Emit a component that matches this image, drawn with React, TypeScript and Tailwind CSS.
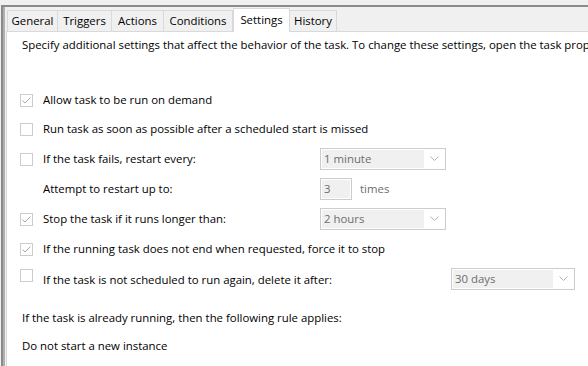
import React from "react";

const tabs: [string, string][] = [
  ["General", "w-[51px]"],
  ["Triggers", "w-[54px]"],
  ["Actions", "w-[52px]"],
  ["Conditions", "w-[69px]"],
  ["Settings", "w-[57px]"],
  ["History", "w-[47px]"],
];

function Check({ checked, className = "" }: { checked?: boolean; className?: string }) {
  return (
    <span className={`flex h-[13px] w-[13px] shrink-0 items-center justify-center border border-[#cccccc] bg-white ${className}`}>
      {checked && (
        <svg width="11" height="11" viewBox="0 0 11 11">
          <path d="M1.5 5.5 L4 8 L9.5 2.5" fill="none" stroke="#a8a8a8" strokeWidth="1" />
        </svg>
      )}
    </span>
  );
}

function Combo({ value, width }: { value: string; width: string }) {
  return (
    <div className={`flex h-[22px] ${width} shrink-0 items-stretch border border-[#cccccc] bg-white p-px`}>
      <div className="flex flex-1 items-center bg-[#f0f0f0] pl-[2px] text-[#6d6d6d]">{value}</div>
      <div className="flex w-[20px] items-center justify-center">
        <svg width="9" height="6" viewBox="0 0 9 6">
          <path d="M0.5 0.5 L4.5 4.5 L8.5 0.5" fill="none" stroke="#b4b4b4" strokeWidth="1" />
        </svg>
      </div>
    </div>
  );
}

function Row({ checked, label, children, h = "h-[30px]" }: { checked?: boolean; label: string; children?: React.ReactNode; h?: string }) {
  return (
    <div className={`flex ${h} items-center whitespace-nowrap`}>
      <Check checked={checked} className="-ml-[2px]" />
      <span className="ml-[10px] w-[277px] shrink-0">{label}</span>
      {children}
    </div>
  );
}

export default function App() {
  return (
    <div
      className="h-[366px] w-[588px] overflow-hidden bg-[#f0f0f0] pt-[5px] pl-[1px] text-[11.4px] text-black"
      style={{ fontFamily: '"Open Sans", "Noto Sans", sans-serif' }}
    >
      <div className="h-full border-t-2 border-l-2 border-[#8a8a8a]">
        <div className="h-full border-l-2 border-[#b0b0b0] pl-[1px]">
          <div className="flex h-[24px] items-end pl-[1px]">
            {tabs.map(([t, w]) =>
              t === "Settings" ? (
                <div key={t} className={`relative z-10 -mb-px flex h-[24px] ${w} items-start justify-center border border-b-0 border-[#d9d9d9] bg-white pt-[2px]`}>
                  {t}
                </div>
              ) : (
                <div key={t} className={`flex h-[21px] ${w} items-center justify-center border border-b-0 border-l-0 border-[#d9d9d9] bg-[#f0f0f0] first:border-l`}>
                  {t}
                </div>
              )
            )}
          </div>
          <div className="h-full border-t border-l border-[#d9d9d9] bg-white pl-[15px]">
            <div className="flex h-[26px] items-center whitespace-nowrap">
              Specify additional settings that affect the behavior of the task. To change these settings, open the task properties dialog.
            </div>
            <div className="h-[28px]" />
            <Row checked label="Allow task to be run on demand" h="h-[28px]" />
            <Row label="Run task as soon as possible after a scheduled start is missed" />
            <Row label="If the task fails, restart every:">
              <Combo value="1 minute" width="w-[126px]" />
            </Row>
            <div className="flex h-[30px] items-center whitespace-nowrap">
              <span className="ml-[21px] w-[277px] shrink-0">Attempt to restart up to:</span>
              <div className="flex h-[22px] w-[32px] items-stretch border border-[#cccccc] bg-white p-px">
                <div className="flex flex-1 items-center bg-[#f0f0f0] pl-[2px] text-[#6d6d6d]">3</div>
              </div>
              <span className="ml-[8px] text-[#6d6d6d]">times</span>
            </div>
            <Row checked label="Stop the task if it runs longer than:">
              <Combo value="2 hours" width="w-[126px]" />
            </Row>
            <Row checked label="If the running task does not end when requested, force it to stop" />
            <div className="flex h-[32px] items-center whitespace-nowrap">
              <Check className="-ml-[2px] mb-[10px]" />
              <span className="ml-[10px] w-[408px] shrink-0">If the task is not scheduled to run again, delete it after:</span>
              <div className="-mt-[3px]">
                <Combo value="30 days" width="w-[124px]" />
              </div>
            </div>
            <div className="flex h-[32px] items-end pb-[2px]">If the task is already running, then the following rule applies:</div>
            <div className="flex h-[35px] items-center">Do not start a new instance</div>
          </div>
        </div>
      </div>
    </div>
  );
}
